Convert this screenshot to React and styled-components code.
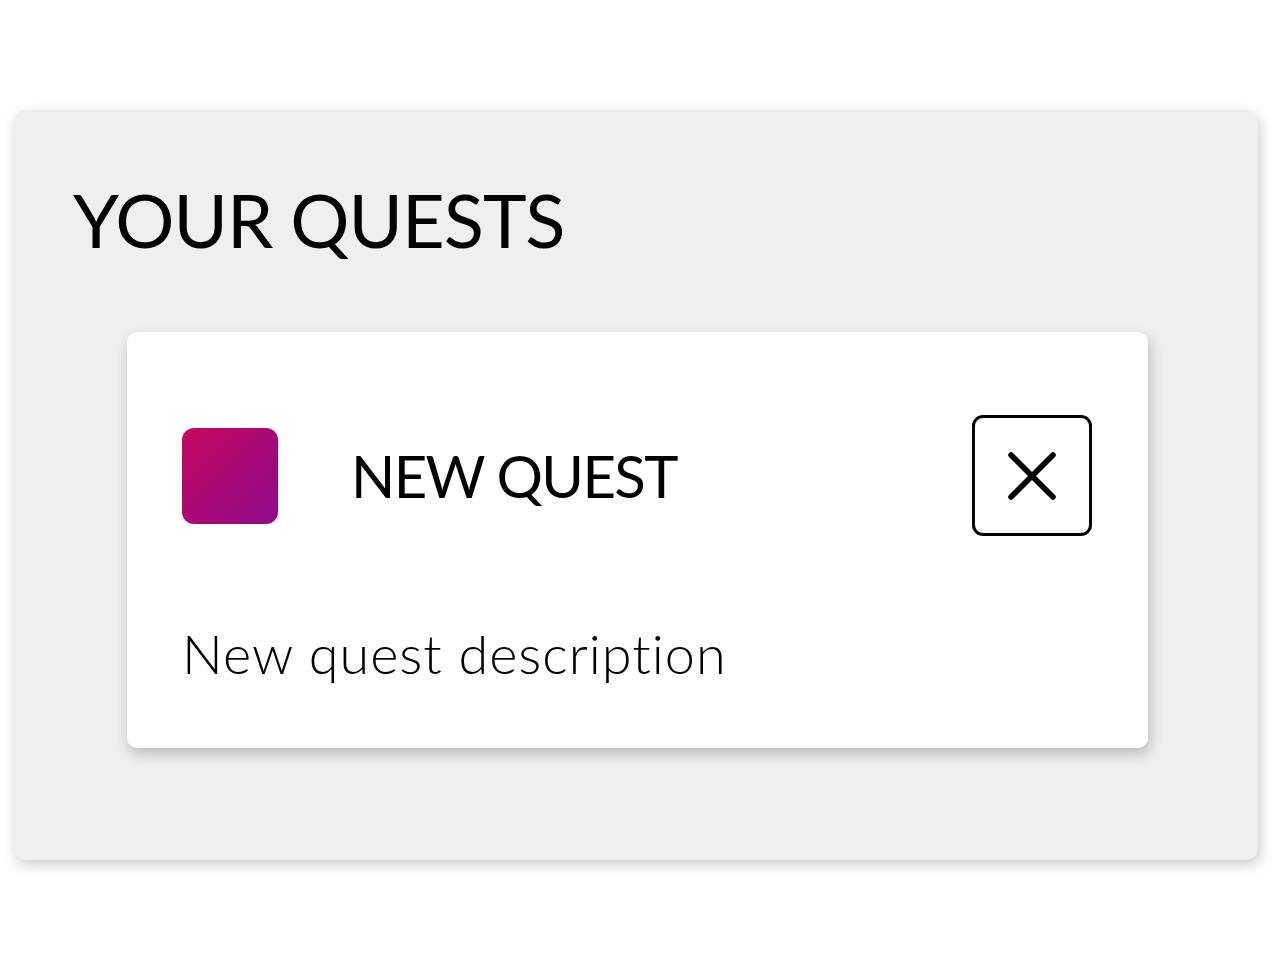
import React from 'react'
import styled, { createGlobalStyle } from 'styled-components'

const GlobalStyle = createGlobalStyle`
  html, body {
    margin: 0;
    padding: 0;
    background: #ffffff;
  }

  body {
    font-family: Lato, "Noto Sans", sans-serif;
    color: #000000;
    font-variant-ligatures: none;
  }
`

const App = () => {
  return (
    <>
      <GlobalStyle />
      <Page>
        <Board>
          <BoardTitle>YOUR QUESTS</BoardTitle>

          <QuestCard>
            <QuestHeader>
              <QuestIcon />
              <QuestName>NEW QUEST</QuestName>
              <CloseButton aria-label="Remove quest">
                <svg width="50" height="50" viewBox="0 0 50 50">
                  <path
                    d="M4 4 L46 46 M46 4 L4 46"
                    stroke="#000"
                    strokeWidth="5.5"
                    strokeLinecap="round"
                  />
                </svg>
              </CloseButton>
            </QuestHeader>

            <QuestDescription>New quest description</QuestDescription>
          </QuestCard>
        </Board>
      </Page>
    </>
  )
}

export default App

const Page = styled.div`
  width: 1280px;
  height: 960px;
  padding: 110px 22px 0 14px;
  box-sizing: border-box;
`

const Board = styled.section`
  height: 750px;
  box-sizing: border-box;
  background-color: #efefef;
  border-radius: 12px;
  box-shadow: 2px 5px 14px rgba(0, 0, 0, 0.2);

  padding: 70px 110px 0 59px;
`

const BoardTitle = styled.h1`
  margin: 0 0 72px 0;
  font-size: 74px;
  font-weight: 400;
  line-height: 80px;
  letter-spacing: -1px;
`

const QuestCard = styled.div`
  margin-left: 54px;
  height: 416px;
  box-sizing: border-box;
  background-color: #ffffff;
  border-radius: 10px;
  box-shadow: 2px 6px 14px rgba(0, 0, 0, 0.22);

  padding: 83px 56px 0 55px;
`

const QuestHeader = styled.div`
  display: flex;
  align-items: center;
`

const QuestIcon = styled.div`
  width: 96px;
  height: 96px;
  border-radius: 12px;
  background: linear-gradient(135deg, #c4085f 0%, #8f0a8c 100%);
  flex-shrink: 0;
`

const QuestName = styled.div`
  flex: 1;
  margin-left: 73px;
  font-size: 58px;
  font-weight: 400;
  letter-spacing: -1.6px;
`

const CloseButton = styled.button`
  width: 120px;
  height: 121px;
  box-sizing: border-box;
  border: 3px solid #000;
  border-radius: 11px;
  background: #ffffff;
  display: flex;
  align-items: center;
  justify-content: center;
  padding: 0;
  cursor: pointer;
`

const QuestDescription = styled.p`
  margin: 88px 0 0 0;
  font-size: 54px;
  font-weight: 300;
  line-height: 60px;
  letter-spacing: 1px;
`
